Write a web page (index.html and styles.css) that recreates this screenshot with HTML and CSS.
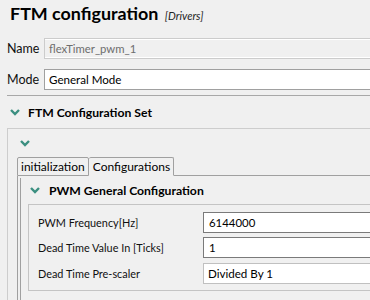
FILE: index.html
```html
<!DOCTYPE html>
<html lang="en">
  <head>
    <meta charset="UTF-8" />
    <title>FTM configuration</title>
    <link rel="stylesheet" href="styles.css">
  </head>
  <body>
    <div class="page">
      <h1 class="title">FTM configuration <span class="tag">[Drivers]</span></h1>

      <div class="field">
        <label>Name</label>
        <div class="input readonly">flexTimer_pwm_1</div>
      </div>
      <div class="field mode">
        <label>Mode</label>
        <div class="input">General Mode</div>
      </div>

      <div class="sep"></div>

      <div class="section-head">
        <svg class="chev" width="10" height="7" viewBox="0 0 10 7"><polyline points="1,1 5,5 9,1" /></svg>
        <span>FTM Configuration Set</span>
      </div>

      <div class="panel">
        <div class="panel-toggle">
          <svg class="chev" width="10" height="7" viewBox="0 0 10 7"><polyline points="1,1 5,5 9,1" /></svg>
        </div>

        <div class="tabfolder">
          <div class="tabs">
            <span class="tab">initialization</span>
            <span class="tab active">Configurations</span>
            <span class="tab-fill"></span>
          </div>
          <div class="tab-body">
            <div class="tab-inner">
              <div class="group-head">
                <svg class="chev" width="10" height="7" viewBox="0 0 10 7"><polyline points="1,1 5,5 9,1" /></svg>
                <span>PWM General Configuration</span>
              </div>
              <div class="group">
                <div class="row">
                  <label>PWM Frequency[Hz]</label>
                  <div class="input">6144000</div>
                </div>
                <div class="row">
                  <label>Dead Time Value In [Ticks]</label>
                  <div class="input">1</div>
                </div>
                <div class="row combo-row">
                  <label>Dead Time Pre-scaler</label>
                  <div class="input combo">Divided By 1</div>
                </div>
              </div>
            </div>
          </div>
        </div>
      </div>
    </div>
  </body>
</html>
```

FILE: styles.css
```css
* {
  margin: 0;
  padding: 0;
  box-sizing: border-box;
}

html,
body {
  width: 370px;
  height: 300px;
  overflow: hidden;
}

body {
  font-family: Lato, "Noto Sans", sans-serif;
  font-size: 11.5px;
  color: #111;
  background-color: #f0f0f0;
}

.page {
  width: 400px;
  height: 300px;
  overflow: hidden;
}

.title {
  padding-left: 10px;
  height: 26px;
  line-height: 27px;
  font-size: 17.9px;
  font-weight: 700;
  color: #000;
}

.title .tag {
  font-size: 11px;
  font-weight: 400;
  font-style: italic;
  color: #222;
  margin-left: 2px;
}

.field {
  display: flex;
  align-items: center;
  padding-left: 7px;
  height: 21px;
  margin-top: 12px;
  font-size: 12.5px;
}

.field.mode {
  margin-top: 10px;
}

.field label {
  width: 37px;
}

.input {
  flex: 1;
  height: 21px;
  line-height: 19px;
  padding-left: 4px;
  border: 1px solid #a0a0a0;
  background-color: #fff;
  color: #000;
  font-size: 11.6px;
}

.input.readonly {
  border-color: #cccccc;
  background-color: #f0f0f0;
  color: #6d6d6d;
  font-size: 11.3px;
  box-shadow: inset 0 1px #fff, inset 0 -1px #fff;
}

.sep {
  height: 1px;
  margin: 5px 0 0 7px;
  background-color: #a8a8a8;
}

.chev {
  display: block;
  flex: none;
}

.chev polyline {
  fill: none;
  stroke: #3b8f80;
  stroke-width: 2.4;
}

.section-head {
  display: flex;
  align-items: center;
  gap: 8px;
  height: 24px;
  margin-top: 4px;
  padding-left: 10px;
  font-size: 12.2px;
  font-weight: 700;
  color: #000;
}

.panel {
  margin: 4px 0 0 7px;
  height: 200px;
  border-top: 1px solid #cdcdcd;
  border-left: 1px solid #cdcdcd;
}

.panel-toggle {
  display: flex;
  align-items: center;
  height: 28px;
  padding-left: 12px;
}

.tabfolder {
  margin-left: 9px;
}

.tabs {
  display: flex;
  height: 19px;
  font-size: 12px;
}

.tab {
  height: 19px;
  line-height: 17px;
  padding: 0 3px;
  border: 1px solid #a0a0a0;
  border-radius: 2px 2px 0 0;
  color: #000;
}

.tab.active {
  border-left: none;
  border-bottom-color: transparent;
  padding-left: 4px;
}

.tab-fill {
  flex: 1;
  border-bottom: 1px solid #a0a0a0;
}

.tab-body {
  border-left: 1px solid #a0a0a0;
  padding: 2px 0 0 2px;
  height: 140px;
}

.tab-inner {
  border-left: 1px solid #a0a0a0;
  height: 140px;
}

.group-head {
  display: flex;
  align-items: center;
  gap: 9px;
  height: 24px;
  padding-left: 9px;
  font-size: 12.2px;
  font-weight: 700;
  color: #000;
}

.group {
  margin: 2px 0 0 7px;
  padding: 7px 0 6px 9px;
  border: 1px solid #c4c4c4;
  border-right: none;
}

.row {
  display: flex;
  align-items: center;
  height: 21px;
  margin-top: 4px;
  font-size: 10.9px;
}

.row:first-child {
  margin-top: 0;
}

.row.combo-row {
  margin-top: 5px;
}

.row label {
  width: 165px;
}

.row .input {
  padding-left: 5px;
  border-color: #7a7a7a;
  font-size: 11.4px;
}

.row .input.combo {
  border-color: #c0c0c0;
  padding-left: 4px;
  font-size: 11.6px;
}
```
